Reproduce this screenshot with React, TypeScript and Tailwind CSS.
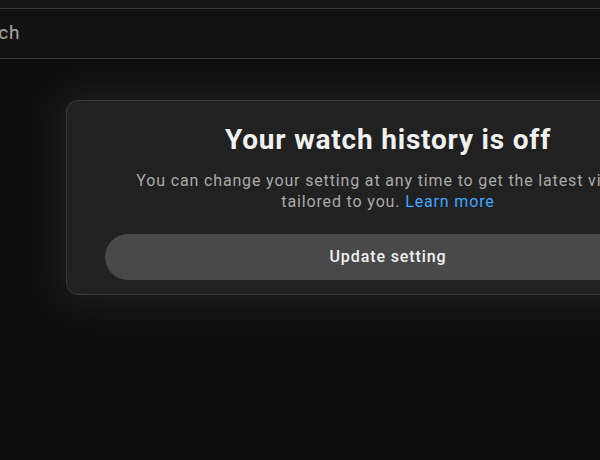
import React from "react";

export default function App() {
  return (
    <div
      className="w-[600px] h-[460px] overflow-hidden bg-[#0f0f0f] flex flex-col"
      style={{ fontFamily: "Roboto, 'Liberation Sans', sans-serif" }}
    >
      <div className="h-[9px] shrink-0 bg-[#141414] border-b border-[#3a3a3a]" />
      <div className="h-[50px] shrink-0 bg-[#121212] border-b border-[#3a3a3a] flex items-center">
        <span className="ml-[-42px] text-[19px] tracking-[0.6px] text-[#a8a8a8] leading-none pb-[2px]">Search</span>
      </div>
      <div className="flex shrink-0 pt-[41px] pl-[66px]">
        <div className="w-[644px] shrink-0 rounded-[12px] border border-[#3a3a3a] bg-[#212121] shadow-[0_0_44px_8px_rgba(255,255,255,0.07)] px-[38px] pt-[21px] pb-[14px] flex flex-col items-center">
          <h2 className="text-[28px] leading-[36px] font-bold text-[#f1f1f1] tracking-[0.8px] whitespace-nowrap">
            Your watch history is off
          </h2>
          <p className="mt-[12px] text-[16px] leading-[21px] tracking-[0.85px] text-[#aaaaaa] text-center whitespace-nowrap">
            You can change your setting at any time to get the latest videos
            <br />
            tailored to you. <span className="text-[#3ea6ff]">Learn more</span>
          </p>
          <button className="mt-[22px] w-full h-[46px] rounded-full bg-[#494949] text-[#f1f1f1] text-[16px] tracking-[0.9px] font-medium">
            Update setting
          </button>
        </div>
      </div>
    </div>
  );
}
